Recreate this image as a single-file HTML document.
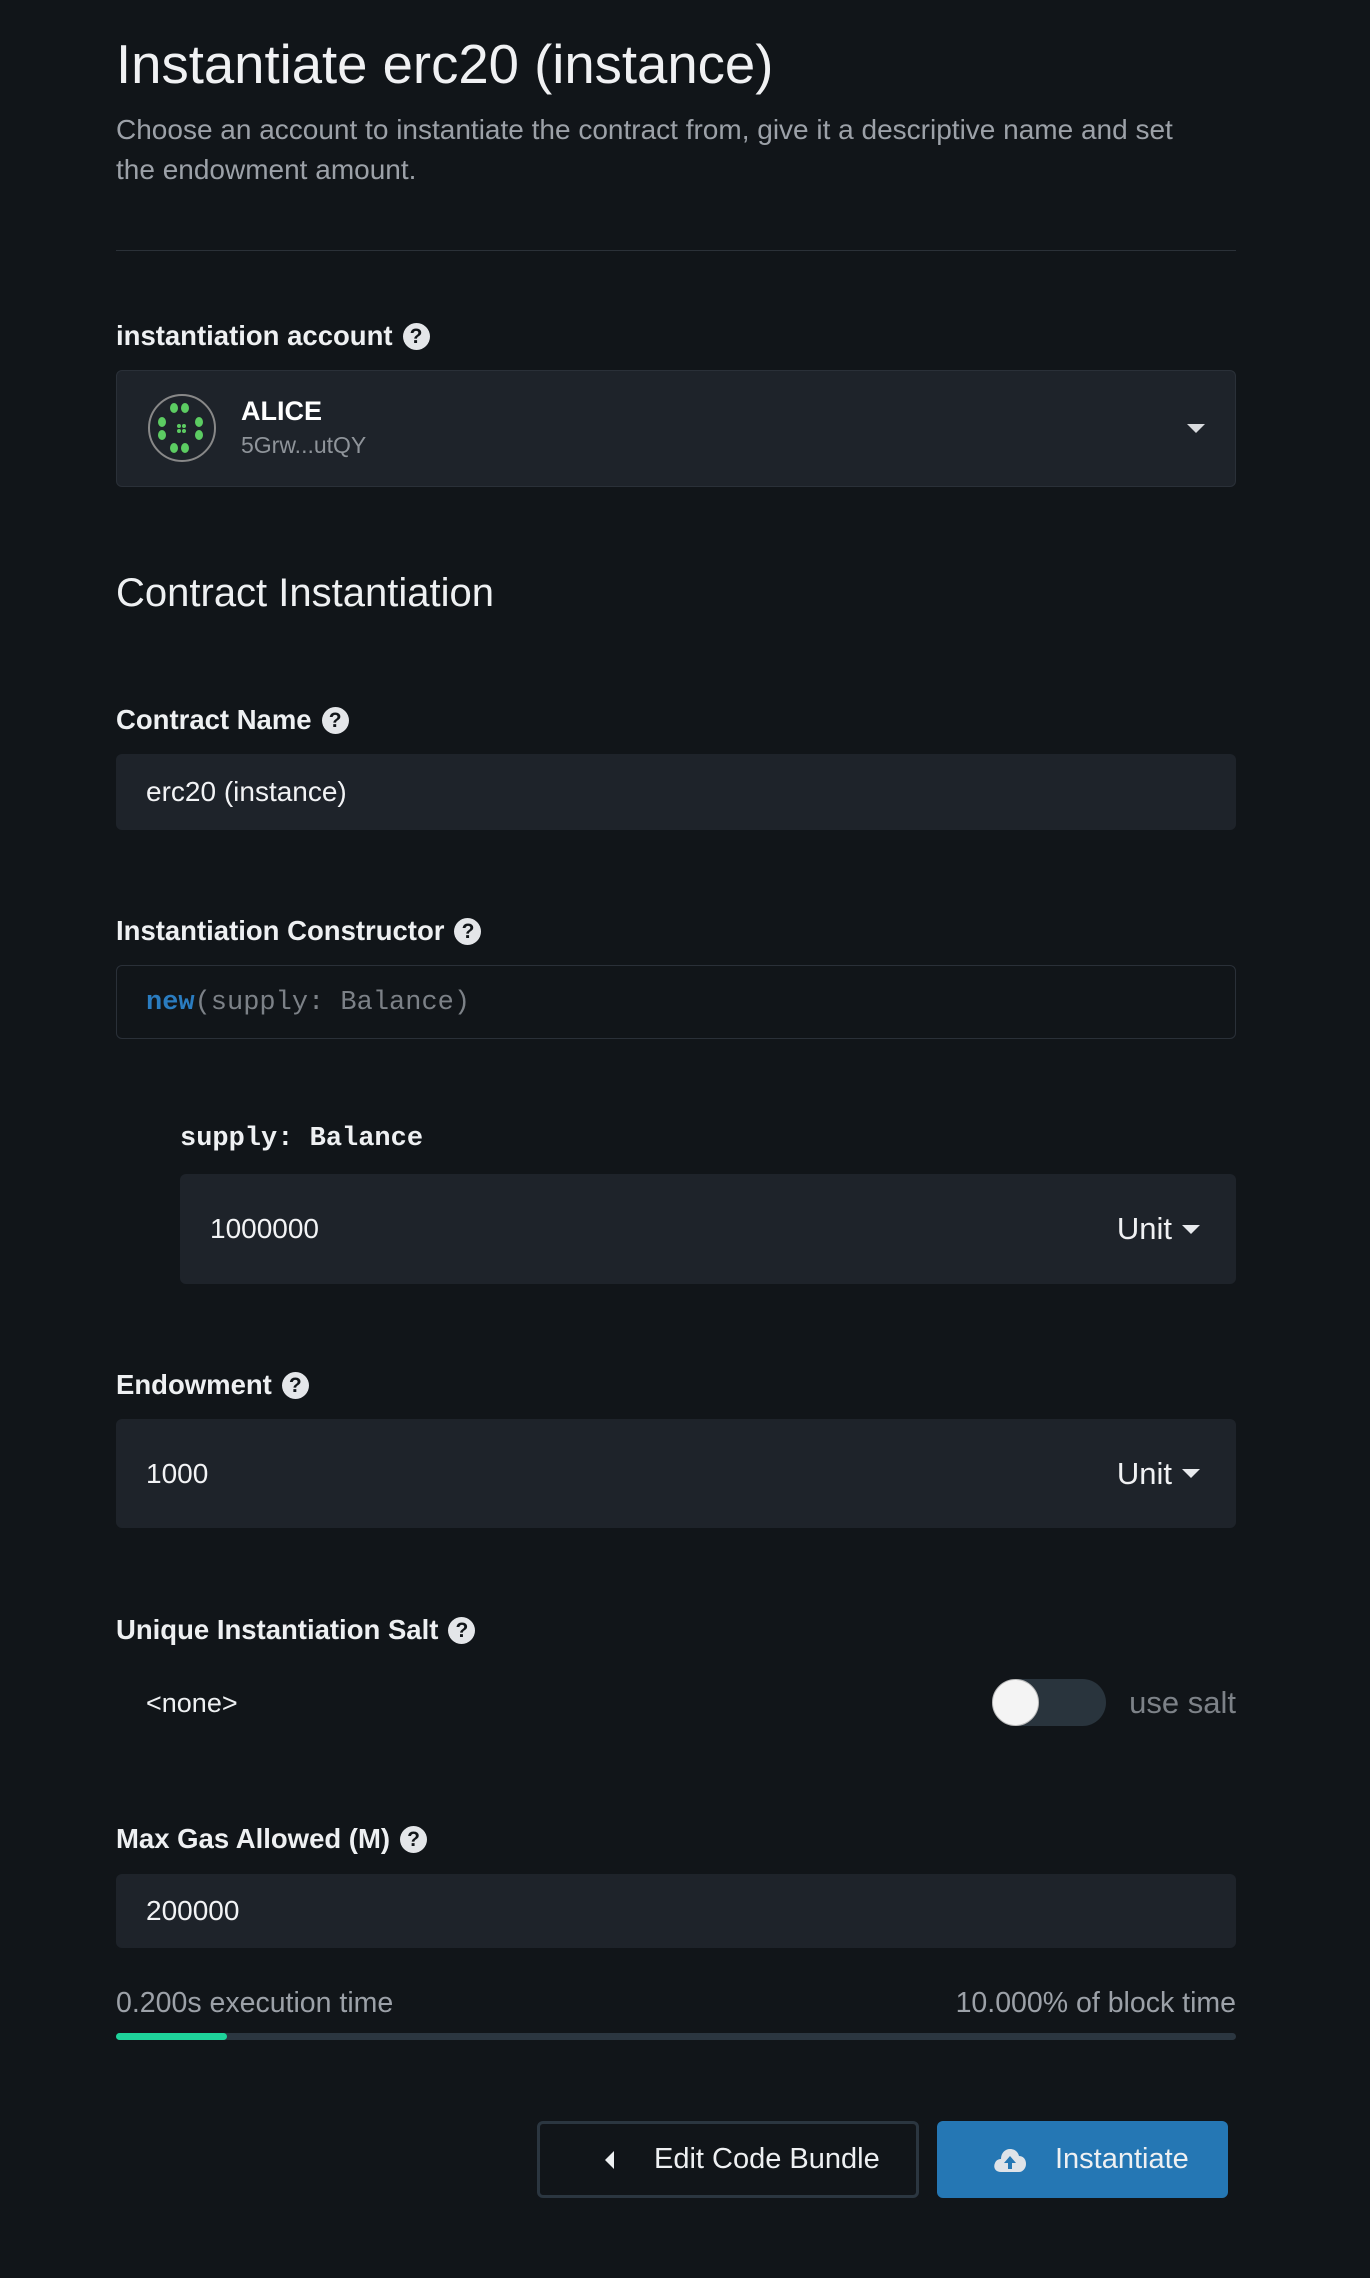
<!DOCTYPE html>
<html><head><meta charset="utf-8"><style>
*{box-sizing:border-box;margin:0;padding:0}
body{width:1370px;height:2278px;background:#111519;font-family:"Liberation Sans",sans-serif;color:#e8eaed;position:relative;overflow:hidden}
.a{position:absolute}
.lbl{position:absolute;left:116px;font-size:27.5px;font-weight:bold;color:#eef0f2;line-height:30px;display:flex;align-items:center}
.q{display:inline-block;width:27px;height:27px;border-radius:50%;background:#e4e6e9;color:#111519;font-size:21px;font-weight:bold;text-align:center;line-height:27px;margin-left:10px}
.inp{position:absolute;background:#1e232a;border-radius:6px;font-size:28px;color:#f2f3f5;display:flex;align-items:center}
.unit{position:absolute;right:36px;font-size:31px;color:#f0f1f3;display:flex;align-items:center}
.tri{display:inline-block;width:0;height:0;border-left:9px solid transparent;border-right:9px solid transparent;border-top:9px solid #e8eaed;margin-left:10px}
</style></head><body>
<div class="a" style="left:116px;top:35px;font-size:54.5px;color:#f0f1f3;line-height:60px">Instantiate erc20 (instance)</div>
<div class="a" style="left:116px;top:110px;width:1090px;font-size:28px;color:#9ca1a8;line-height:40px">Choose an account to instantiate the contract from, give it a descriptive name and set the endowment amount.</div>
<div class="a" style="left:116px;top:250px;width:1120px;height:1px;background:#2b3138"></div>

<div class="lbl" style="top:321px">instantiation account<span class="q">?</span></div>
<div class="a" style="left:116px;top:370px;width:1120px;height:117px;background:#1e232a;border:1px solid #2a3038;border-radius:6px"></div>
<svg class="a" style="left:147px;top:393px" width="70" height="70" viewBox="0 0 70 70">
<circle cx="35" cy="35" r="33" fill="none" stroke="#888" stroke-width="2"/>
<g fill="#5ccc62"><ellipse cx="27" cy="15" rx="4" ry="5"/><ellipse cx="38" cy="15" rx="4" ry="5"/><ellipse cx="27" cy="55" rx="4" ry="5"/><ellipse cx="38" cy="55" rx="4" ry="5"/><ellipse cx="15" cy="29" rx="4" ry="5"/><ellipse cx="15" cy="42" rx="4" ry="5"/><ellipse cx="52" cy="29" rx="4" ry="5"/><ellipse cx="52" cy="42" rx="4" ry="5"/><circle cx="32" cy="33" r="2"/><circle cx="37" cy="33" r="2"/><circle cx="32" cy="38" r="2"/><circle cx="37" cy="38" r="2"/></g></svg>
<div class="a" style="left:241px;top:396px;font-size:27px;font-weight:bold;color:#fff">ALICE</div>
<div class="a" style="left:241px;top:432px;font-size:23px;color:#8f949a">5Grw...utQY</div>
<div class="a tri" style="left:1177px;top:424px;border-top-color:#d8dadd"></div>

<div class="a" style="left:116px;top:571px;font-size:40px;color:#eef0f2">Contract Instantiation</div>

<div class="lbl" style="top:705px">Contract Name<span class="q">?</span></div>
<div class="inp" style="left:116px;top:754px;width:1120px;height:76px;padding-left:30px">erc20 (instance)</div>

<div class="lbl" style="top:916px">Instantiation Constructor<span class="q">?</span></div>
<div class="a" style="left:116px;top:965px;width:1120px;height:74px;border:1.5px solid #2a3038;border-radius:6px;font-family:'Liberation Mono',monospace;font-size:27px;color:#7c8187;padding:22px 0 0 29px"><b style="color:#2a7cc0">new</b>(supply: Balance)</div>

<div class="a" style="left:180px;top:1124px;font-family:'Liberation Mono',monospace;font-weight:bold;font-size:27px;color:#eef0f2">supply: Balance</div>
<div class="inp" style="left:180px;top:1174px;width:1056px;height:110px;padding-left:30px">1000000<span class="unit">Unit<span class="tri"></span></span></div>

<div class="lbl" style="top:1370px">Endowment<span class="q">?</span></div>
<div class="inp" style="left:116px;top:1419px;width:1120px;height:109px;padding-left:30px">1000<span class="unit">Unit<span class="tri"></span></span></div>

<div class="lbl" style="top:1615px">Unique Instantiation Salt<span class="q">?</span></div>
<div class="a" style="left:146px;top:1688px;font-size:27px;color:#eef0f2">&lt;none&gt;</div>
<div class="a" style="left:992px;top:1679px;width:114px;height:47px;border-radius:24px;background:#29343d"></div>
<div class="a" style="left:992px;top:1679px;width:47px;height:47px;border-radius:50%;background:#f4f4f4;border:1px solid #bbb"></div>
<div class="a" style="right:134px;top:1685px;font-size:31px;color:#7d8288">use salt</div>

<div class="lbl" style="top:1824px">Max Gas Allowed (M)<span class="q">?</span></div>
<div class="inp" style="left:116px;top:1874px;width:1120px;height:74px;padding-left:30px">200000</div>
<div class="a" style="left:116px;top:1987px;font-size:28.5px;color:#9ca1a8">0.200s execution time</div>
<div class="a" style="right:134px;top:1987px;font-size:28.5px;color:#9ca1a8">10.000% of block time</div>
<div class="a" style="left:116px;top:2033px;width:1120px;height:7px;border-radius:4px;background:#2b3640"></div>
<div class="a" style="left:116px;top:2033px;width:111px;height:7px;border-radius:4px;background:#1ed39a"></div>

<div class="a" style="left:537px;top:2121px;width:382px;height:77px;border:3px solid #2b3640;border-radius:6px;font-size:29px;color:#eef0f2;display:flex;align-items:center;padding-left:65px">
<span style="display:inline-block;width:0;height:0;border-top:9px solid transparent;border-bottom:9px solid transparent;border-right:9px solid #eef0f2;margin-right:40px"></span>Edit Code Bundle</div>
<div class="a" style="left:937px;top:2121px;width:291px;height:77px;background:#2577b4;border-radius:6px;font-size:29px;color:#eef0f2;display:flex;align-items:center;padding-left:56px">
<svg width="34" height="28" viewBox="0 0 34 28" style="margin-right:28px"><path d="M8 26 C2 26 0 21 2 17 C3 14 6 13 8 13 C8 7 12 3 17 3 C22 3 25 6 26 10 C30 10 33 13 33 18 C33 22 30 26 26 26 Z" fill="#dfe3e8"/><path d="M17 10 L11 17 H15 V23 H19 V17 H23 Z" fill="#2577b4"/></svg>Instantiate</div>
</body></html>
